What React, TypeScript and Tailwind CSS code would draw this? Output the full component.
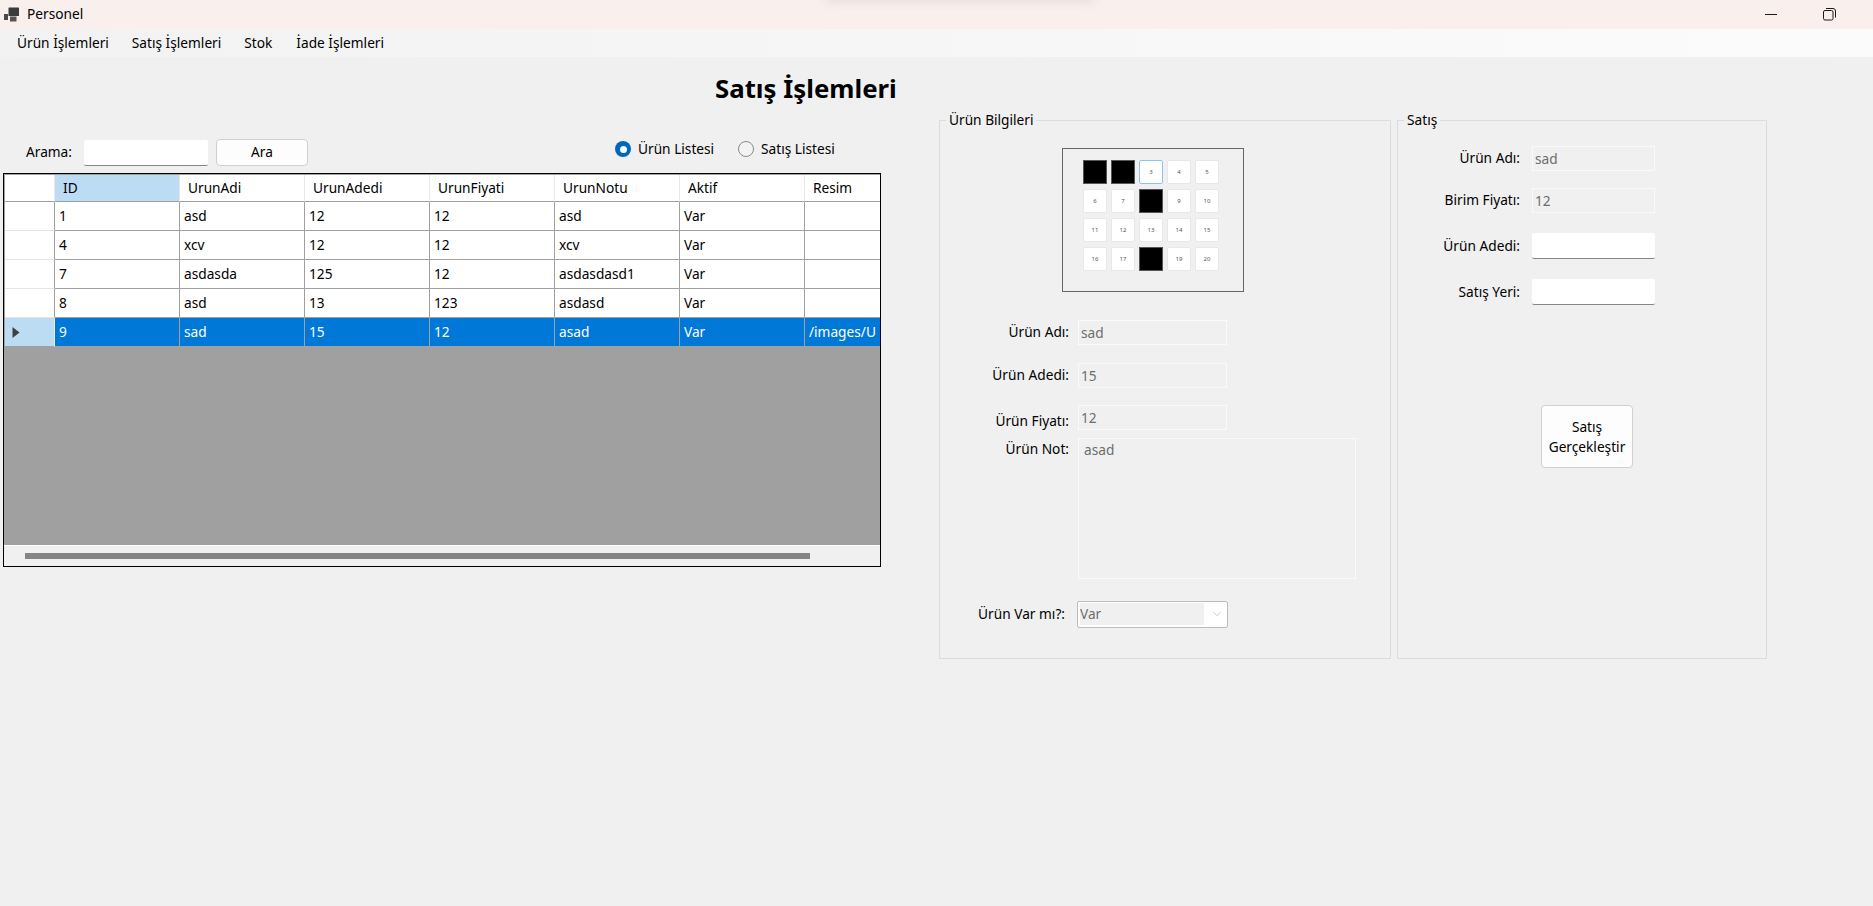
import React from "react";
import { ChevronDown } from "lucide-react";

const columns = ["ID", "UrunAdi", "UrunAdedi", "UrunFiyati", "UrunNotu", "Aktif", "Resim"];

const rows = [
  ["1", "asd", "12", "12", "asd", "Var", ""],
  ["4", "xcv", "12", "12", "xcv", "Var", ""],
  ["7", "asdasda", "125", "12", "asdasdasd1", "Var", ""],
  ["8", "asd", "13", "123", "asdasd", "Var", ""],
  ["9", "sad", "15", "12", "asad", "Var", "/images/U"],
];

const soldSeats = [1, 2, 8, 18];
const seats = Array.from({ length: 20 }, (_, i) => i + 1);

function AppIcon() {
  return (
    <svg width="16" height="16" viewBox="0 0 16 16" className="shrink-0">
      <rect x="4.5" y="0.5" width="10.5" height="8.5" rx="0.5" fill="#3c3c3c" />
      <rect x="0" y="7" width="4" height="6" fill="#4a4a4a" />
      <rect x="6" y="9.5" width="6.5" height="5" fill="#555555" />
    </svg>
  );
}

function RestoreIcon() {
  return (
    <svg width="13" height="13" viewBox="0 0 13 13" fill="none" stroke="#1a1a1a" strokeWidth="1">
      <rect x="0.5" y="2.5" width="9.5" height="9.5" rx="1.5" />
      <path d="M3 0.5h7a2.5 2.5 0 0 1 2.5 2.5v6.5" />
    </svg>
  );
}

function Radio({ label, checked }: { label: string; checked?: boolean }) {
  return (
    <div className="flex w-[123px] items-center gap-[7px]">
      {checked ? (
        <span className="flex h-4 w-4 items-center justify-center rounded-full bg-[#0067c0]">
          <span className="h-[7px] w-[7px] rounded-full bg-white" />
        </span>
      ) : (
        <span className="h-4 w-4 rounded-full border border-[#8a8a8a] bg-[#f3f3f3]" />
      )}
      <span className="whitespace-nowrap">{label}</span>
    </div>
  );
}

function Grid() {
  return (
    <div className="flex h-[394px] w-[878px] flex-col overflow-hidden border border-black bg-[#a0a0a0] pl-px pt-px">
      <div className="grid shrink-0 grid-cols-[50px_repeat(7,125px)] bg-white">
        <div className="h-[27px] border-r border-b border-r-[#e8e8e8] border-b-[#a0a0a0]" />
        {columns.map((c, i) => (
          <div
            key={c}
            className={`flex h-[27px] items-center border-r border-b border-r-[#e8e8e8] border-b-[#a0a0a0] pl-2 ${
              i === 0 ? "bg-[#bcdcf4]" : ""
            }`}
          >
            {c}
          </div>
        ))}
      </div>
      {rows.map((row, r) => {
        const selected = r === rows.length - 1;
        return (
          <div key={row[0]} className="grid shrink-0 grid-cols-[50px_repeat(7,125px)]">
            <div
              className={`flex h-[29px] items-center border-r border-b pl-[7px] ${
                selected
                  ? "border-r-[#e8e8e8] border-b-[#a0a0a0] bg-[#bcdcf4]"
                  : "border-r-[#a0a0a0] border-b-[#e4e4e4] bg-white"
              }`}
            >
              {selected && (
                <svg width="8" height="11" viewBox="0 0 8 11">
                  <path d="M0.5 0L7.5 5.5L0.5 11Z" fill="#404040" />
                </svg>
              )}
            </div>
            {row.map((cell, i) => (
              <div
                key={i}
                className={`flex h-[29px] items-center overflow-hidden whitespace-nowrap border-r border-b pl-1 ${
                  selected
                    ? "border-r-[#a0a0a0] border-b-[#a0a0a0] bg-[#0078d7] text-white"
                    : "border-[#a0a0a0] bg-white"
                }`}
              >
                {cell}
              </div>
            ))}
          </div>
        );
      })}
      <div className="flex-1" />
      <div className="-ml-px flex h-[21px] shrink-0 items-center border-t border-white bg-[#f0f0f0] pl-[21px]">
        <div className="h-[6px] w-[785px] bg-[#858585]" />
      </div>
    </div>
  );
}

function TextField({ value, className }: { value?: string; className: string }) {
  const enabled = value === undefined;
  return (
    <input
      readOnly
      value={value ?? ""}
      className={`block h-[25px] px-[2px] outline-none ${className} ${
        enabled
          ? "rounded-[2px] border-b border-b-[#868686] bg-white"
          : "border border-[#fafafa] bg-[#f0f0f0] text-[#6d6d6d]"
      }`}
    />
  );
}

function GroupBox({ title, className, children }: { title: string; className: string; children: React.ReactNode }) {
  return (
    <div className={`relative h-[539px] shrink-0 border border-[#dcdcdc] ${className}`}>
      <span className="absolute -top-[11px] left-[6px] bg-[#f0f0f0] px-[3px] leading-5">{title}</span>
      {children}
    </div>
  );
}

function SeatMap() {
  return (
    <div className="ml-[122px] mt-[27px] h-[144px] w-[182px] border border-[#666666] pl-[20px] pt-[11px]">
      <div className="grid w-[136px] grid-cols-[repeat(5,24px)] gap-x-[4px] gap-y-[5px]">
        {seats.map((n) =>
          soldSeats.includes(n) ? (
            <div key={n} className="h-6 w-6 border border-[#555555] bg-black" />
          ) : (
            <div
              key={n}
              className={`flex h-6 w-6 items-center justify-center rounded-[2px] bg-white text-[6px] text-[#555555] ${
                n === 3 ? "border border-[#8fc4ee]" : "border border-[#e8e8e8]"
              }`}
            >
              {n}
            </div>
          ),
        )}
      </div>
    </div>
  );
}

function ProductBox() {
  return (
    <GroupBox title="Ürün Bilgileri" className="w-[452px]">
      <SeatMap />
      <div className="mt-[28px] flex items-center gap-[9px]">
        <span className="w-[129px] text-right">Ürün Adı:</span>
        <TextField value="sad" className="w-[149px]" />
      </div>
      <div className="mt-[18px] flex items-center gap-[9px]">
        <span className="w-[129px] text-right">Ürün Adedi:</span>
        <TextField value="15" className="w-[149px]" />
      </div>
      <div className="mt-[17px] flex items-start gap-[9px]">
        <span className="w-[129px] pt-[6px] text-right">Ürün Fiyatı:</span>
        <TextField value="12" className="w-[149px]" />
      </div>
      <div className="mt-[6px] flex items-start gap-[9px]">
        <span className="w-[129px] pt-px text-right">Ürün Not:</span>
        <textarea
          readOnly
          value="asad"
          className="block h-[141px] w-[278px] resize-none border border-[#fafafa] bg-[#f0f0f0] px-[5px] py-[1px] text-[#6d6d6d] outline-none"
        />
      </div>
      <div className="mt-[22px] flex items-center gap-[12px]">
        <span className="w-[125px] text-right">Ürün Var mı?:</span>
        <div className="flex h-[27px] w-[151px] items-center rounded-[2px] border border-[#bcbcbc] bg-white pl-[2px]">
          <span className="flex h-[22px] w-[124px] items-center bg-[#f0f0f0] text-[#6d6d6d]">Var</span>
          <ChevronDown className="ml-[6px] text-[#a8a8a8]" size={14} strokeWidth={1} />
        </div>
      </div>
    </GroupBox>
  );
}

function SaleBox() {
  return (
    <GroupBox title="Satış" className="ml-[6px] w-[370px]">
      <div className="mt-[25px] flex items-center gap-[12px]">
        <span className="w-[122px] text-right">Ürün Adı:</span>
        <TextField value="sad" className="w-[123px]" />
      </div>
      <div className="mt-[17px] flex items-center gap-[12px]">
        <span className="w-[122px] text-right">Birim Fiyatı:</span>
        <TextField value="12" className="w-[123px]" />
      </div>
      <div className="mt-[20px] flex items-center gap-[12px]">
        <span className="w-[122px] text-right">Ürün Adedi:</span>
        <TextField className="w-[123px] h-[26px]" />
      </div>
      <div className="mt-[20px] flex items-center gap-[12px]">
        <span className="w-[122px] text-right">Satış Yeri:</span>
        <TextField className="w-[123px] h-[26px]" />
      </div>
      <button className="ml-[143px] mt-[100px] block h-[63px] w-[92px] rounded-[4px] border border-[#d0d0d0] bg-[#fdfdfd] leading-5">
        Satış
        <br />
        Gerçekleştir
      </button>
    </GroupBox>
  );
}

export default function App() {
  return (
    <div className="flex h-screen w-full flex-col overflow-hidden bg-[#f0f0f0] font-['Noto_Sans',sans-serif] text-[13.7px] text-black">
      <div className="relative flex h-[29px] shrink-0 items-center overflow-hidden bg-[#f9efec] pl-1">
        <AppIcon />
        <span className="ml-[7px]">Personel</span>
        <div className="absolute -top-[8px] left-[825px] h-[10px] w-[270px] rounded-full bg-[#e8dcd9] blur-[4px]" />
        <div className="ml-auto flex items-center">
          <div className="h-px w-3 bg-[#1a1a1a]" />
          <div className="ml-[46px] mr-[37px]">
            <RestoreIcon />
          </div>
        </div>
      </div>

      <div className="flex h-[28px] shrink-0 items-center bg-gradient-to-r from-[#f2f2f2] to-[#fbfbfb] pl-[17px]">
        <span>Ürün İşlemleri</span>
        <span className="ml-[23px]">Satış İşlemleri</span>
        <span className="ml-[23px]">Stok</span>
        <span className="ml-[24px]">İade İşlemleri</span>
      </div>

      <div className="flex flex-1">
        <div className="w-[936px] shrink-0 pl-[3px]">
          <div className="h-[82px] pl-[712px] pt-[15px]">
            <h1 className="whitespace-nowrap text-[25.8px] font-bold leading-8">Satış İşlemleri</h1>
          </div>
          <div className="flex h-[34px] items-start">
            <span className="ml-[23px] mt-[3px] w-[58px]">Arama:</span>
            <TextField className="mt-px h-[26px] w-[124px]" />
            <button className="ml-[8px] h-[27px] w-[92px] rounded-[4px] border border-[#d0d0d0] bg-[#fdfdfd]">Ara</button>
            <div className="ml-[307px] flex">
              <Radio label="Ürün Listesi" checked />
              <Radio label="Satış Listesi" />
            </div>
          </div>
          <Grid />
        </div>
        <div className="flex pl-[3px] pt-[63px]">
          <ProductBox />
          <SaleBox />
        </div>
      </div>
    </div>
  );
}
